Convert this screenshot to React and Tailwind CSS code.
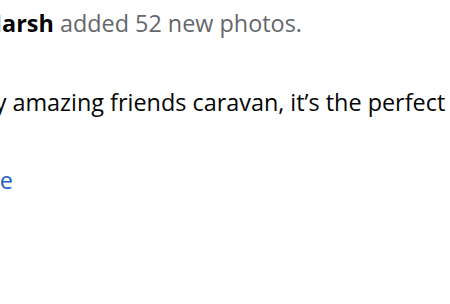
export default function App() {
  return (
    <div className="w-[450px] h-[304px] bg-white overflow-hidden" style={{ fontFamily: '"Open Sans", "Noto Sans", sans-serif' }}>
      <div className="pt-[8px] text-[23.4px] leading-[30px] whitespace-nowrap">
        <div className="-ml-[20px] text-[#65676b]">
          <span className="font-bold text-[#050505]">Marsh</span> added 52 new photos.
        </div>
        <div className="mt-[49px] -ml-[27px] text-[#050505]">
          my amazing friends caravan, it’s the perfect
        </div>
        <div className="mt-[48px] -ml-[45px] text-[#1f5fbf]">
          More
        </div>
      </div>
    </div>
  );
}
